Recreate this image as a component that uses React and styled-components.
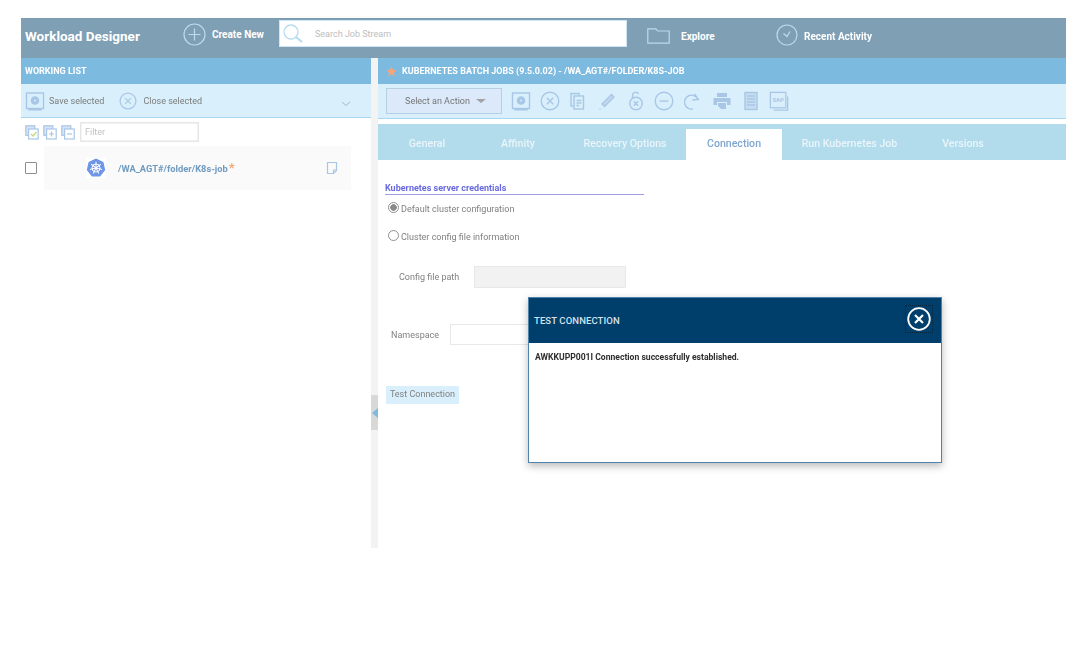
import React from 'react';
import styled, { createGlobalStyle } from 'styled-components';

const GlobalStyle = createGlobalStyle`
  html, body {
    margin: 0;
    padding: 0;
    background: #fff;
    font-family: Roboto, "Liberation Sans", sans-serif;
  }
`;

const Page = styled.div`
  position: relative;
  width: 1092px;
  height: 654px;
  padding: 18px 26px 0 21px;
  box-sizing: border-box;
  overflow: hidden;
  filter: blur(0.4px);
`;

const TopBar = styled.header`
  display: flex;
  align-items: flex-start;
  height: 40px;
  background: #7f9fb5;
  border-top: 1px solid #7b9bb2;
  box-sizing: border-box;
`;

const AppTitle = styled.div`
  width: 162px;
  padding: 10px 0 0 4px;
  box-sizing: border-box;
  color: #fff;
  font-size: 13.5px;
  line-height: 15px;
  font-weight: 700;
`;

const TopItem = styled.div`
  display: flex;
  align-items: center;
  gap: ${p => p.$gap}px;
  width: ${p => p.$width}px;
  height: 30px;
  margin-top: ${p => p.$top || 0}px;
  color: #fff;
  font-size: 10px;
  font-weight: 700;
`;

const TopLabel = styled.span`
  margin-top: ${p => p.$drop || 0}px;
`;

const SearchBox = styled.div`
  display: flex;
  align-items: center;
  gap: 11px;
  width: 348px;
  height: 27px;
  margin: 1px 20px 0 0;
  padding-left: 2px;
  box-sizing: border-box;
  background: #fff;
  border: 1px solid #cfe6f4;
  color: #bdbdbd;
  font-size: 9px;
`;

const Columns = styled.div`
  display: grid;
  grid-template-columns: 350px 7px 688px;
  height: 490px;
`;

const Pane = styled.section`
  display: flex;
  flex-direction: column;
  min-width: 0;
`;

const PaneTitle = styled.div`
  display: flex;
  align-items: center;
  gap: 5px;
  height: 26px;
  padding-left: ${p => p.$pad}px;
  background: #7dbae0;
  color: #fff;
  font-size: 9px;
  font-weight: 700;
  text-transform: uppercase;
`;

const ListTools = styled.div`
  display: flex;
  align-items: center;
  height: 34px;
  padding-left: 4px;
  box-sizing: border-box;
  background: #d9f0fc;
  border-bottom: 1px solid #a9d5ee;
  color: #7b7b7b;
  font-size: 9px;
`;

const ToolLabel = styled.span`
  margin: 0 ${p => p.$after}px 0 ${p => p.$before}px;
`;

const Chevron = styled.svg`
  margin: 7px 0 0 139px;
`;

const FilterRow = styled.div`
  display: flex;
  align-items: center;
  gap: 4px;
  height: 28px;
  padding: 0 0 0 4px;
`;

const FilterInput = styled.div`
  width: 119px;
  height: 20px;
  margin-left: 1px;
  padding-left: 4px;
  box-sizing: border-box;
  border: 1px solid #e6e6e6;
  box-shadow: inset 0 0 0 1px #f2f2f2;
  color: #c2c2c2;
  font-size: 9px;
  line-height: 18px;
`;

const JobRow = styled.div`
  display: flex;
  align-items: center;
  height: 44px;
  padding-left: 4px;
`;

const CheckBox = styled.span`
  width: 10px;
  height: 10px;
  border: 1px solid #8d8d8d;
  border-radius: 1px;
  background: #fff;
  flex: none;
`;

const JobCard = styled.div`
  display: flex;
  align-items: center;
  width: 307px;
  height: 44px;
  margin-left: 7px;
  padding: 0 13px 0 42px;
  box-sizing: border-box;
  background: #fafafa;
`;

const JobName = styled.span`
  flex: 1;
  margin-left: 12px;
  color: #6f9bc0;
  font-size: 9.3px;
  font-weight: 700;
`;

const Star = styled.span`
  color: #f4a67a;
  font-size: 13px;
  line-height: 9px;
  margin-left: 1px;
`;

const Divider = styled.div`
  position: relative;
  background: #f3f3f3;
`;

const Collapse = styled.div`
  position: absolute;
  top: 337px;
  left: 0;
  width: 7px;
  height: 35px;
  display: flex;
  align-items: center;
  background: #d8d8d8;

  &::after {
    content: '';
    border: 5px solid transparent;
    border-left: 0;
    border-right: 6px solid #7dbae0;
    margin-left: 1px;
  }
`;

const ActionBar = styled.div`
  display: flex;
  align-items: center;
  height: 35px;
  padding-left: 8px;
  box-sizing: border-box;
  background: #d9f0fc;
  border-bottom: 1px solid #a9d5ee;
`;

const ActionSelect = styled.div`
  display: flex;
  align-items: center;
  justify-content: center;
  gap: 6px;
  width: 116px;
  height: 26px;
  margin-right: 9px;
  padding-left: 3px;
  box-sizing: border-box;
  background: #dbe9fa;
  border: 1px solid #b6cfe2;
  color: #767676;
  font-size: 9px;

  &::after {
    content: '';
    border: 5px solid transparent;
    border-top: 4px solid #a3a3a3;
    border-bottom: 0;
  }
`;

const IconRow = styled.div`
  display: flex;
  align-items: center;
  gap: 8.7px;
`;

const Tabs = styled.nav`
  display: flex;
  align-items: flex-end;
  height: 36px;
  margin-top: 5px;
  background: #b2dbec;
`;

const Tab = styled.div`
  width: ${p => p.$width}px;
  height: 31px;
  text-align: center;
  text-indent: ${p => p.$indent || 0}px;
  line-height: 29px;
  font-size: 10.6px;
  font-weight: 500;
  color: ${p => (p.$active ? '#7ea6cf' : '#e9f5fa')};
  background: ${p => (p.$active ? '#fff' : 'transparent')};
`;

const Form = styled.div`
  padding: 23px 0 0 7px;
  color: #808080;
  font-size: 9px;
`;

const SectionTitle = styled.div`
  width: 259px;
  height: 11px;
  line-height: 11px;
  border-bottom: 1px solid #9c9ce6;
  color: #6a6adf;
  font-weight: 700;
  white-space: nowrap;
`;

const RadioRow = styled.div`
  display: flex;
  align-items: center;
  gap: 2px;
  height: 14px;
  margin: ${p => p.$top}px 0 0 3px;
`;

const Radio = styled.span`
  width: 9px;
  height: 9px;
  margin-top: -3px;
  border-radius: 50%;
  border: 1px solid #8f8f8f;
  background: ${p => (p.$on ? 'radial-gradient(circle, #8a8a8a 0 3px, #fff 3.5px)' : '#fff')};
  flex: none;
`;

const FieldRow = styled.div`
  display: flex;
  align-items: center;
  height: ${p => p.$h}px;
  margin-top: ${p => p.$top}px;
  padding-left: ${p => p.$pad}px;
`;

const FieldLabel = styled.span`
  width: ${p => p.$width}px;
  flex: none;
`;

const FieldInput = styled.div`
  width: ${p => p.$width}px;
  height: 100%;
  box-sizing: border-box;
  border: 1px solid #e8e8e8;
  background: ${p => (p.$off ? '#f2f2f2' : '#fff')};
`;

const TestButton = styled.div`
  width: 73px;
  height: 18px;
  margin: 41px 0 0 1px;
  background: #d9f0fc;
  color: #808080;
  text-align: center;
  line-height: 17px;
  white-space: nowrap;
`;

const Dialog = styled.div`
  position: absolute;
  left: 528px;
  top: 297px;
  width: 414px;
  height: 166px;
  box-sizing: border-box;
  background: #fff;
  border: 1px solid #4f83ab;
  box-shadow: 0 3px 8px rgba(0, 0, 0, 0.28);
`;

const DialogHead = styled.div`
  display: flex;
  align-items: center;
  justify-content: space-between;
  height: 45px;
  padding: 0 8px 0 5px;
  background: #003f6b;
  color: #d5e2ec;
  font-size: 9.5px;
  font-weight: 500;
  letter-spacing: 0.1px;
`;

const CloseButton = styled.div`
  display: flex;
  width: 28px;
  height: 28px;
  margin-top: -3px;
  align-items: center;
  justify-content: center;
  box-sizing: border-box;
  border: 1px dotted #0a2438;
`;

const DialogBody = styled.div`
  padding: 9px 6px;
  color: #2f2f2f;
  font-size: 8.6px;
  font-weight: 700;
`;

const Svg = ({ w = 20, h = 20, vb = '0 0 20 20', stroke = '#a9c6e6', sw = 1.4, children }) => (
  <svg width={w} height={h} viewBox={vb} fill="none" stroke={stroke} strokeWidth={sw} style={{ flex: 'none' }}>
    {children}
  </svg>
);

const DiskIcon = () => (
  <Svg>
    <rect x="1.5" y="2" width="17" height="15.5" />
    <circle cx="10" cy="9.5" r="3.6" fill="#a9c6e6" />
    <circle cx="10" cy="9.5" r="1" fill="#d9f0fc" stroke="none" />
    <path d="M4 17.5v1.2h12v-1.2" />
  </Svg>
);

const XCircleIcon = ({ size = 20, color }) => (
  <Svg w={size} h={size} stroke={color}>
    <circle cx="10" cy="10" r="8.8" />
    <path d="M6.8 6.8l6.4 6.4M13.2 6.8l-6.4 6.4" />
  </Svg>
);

const CopyIcon = () => (
  <Svg>
    <path d="M5 15H3V2.5h8v2" />
    <rect x="6" y="5" width="9.5" height="13" />
    <path d="M8.5 9.5h5M8.5 12h5M8.5 14.5h2.5" />
  </Svg>
);

const PencilIcon = () => (
  <Svg>
    <path d="M5 13l9.5-9.5 2.5 2.5L7.5 15.5z" fill="#c3d8ec" />
    <path d="M2.5 18h1" />
  </Svg>
);

const UnlockIcon = () => (
  <Svg>
    <path d="M6.5 7V4.5a3.2 3.2 0 0 1 6-1.5" />
    <circle cx="10" cy="12.5" r="6.2" />
    <path d="M7.8 10.3l4.4 4.4M12.2 10.3l-4.4 4.4" />
  </Svg>
);

const MinusCircleIcon = () => (
  <Svg>
    <circle cx="10" cy="10" r="8.8" />
    <path d="M5.5 10h9" />
  </Svg>
);

const RedoIcon = () => (
  <Svg>
    <path d="M15 8.5A7 7 0 1 0 10 18" />
    <path d="M11.5 2.8l3.8 5.6-6 .6" />
  </Svg>
);

const PrinterIcon = () => (
  <Svg stroke="none">
    <path d="M5 2h10v4H5z" fill="#a9c6e6" />
    <path d="M1.5 7h17v7H15v-3H5v3H1.5z" fill="#a9c6e6" />
    <path d="M6 12h8v6H9l-3-3z" fill="#a9c6e6" />
  </Svg>
);

const DocIcon = () => (
  <Svg>
    <rect x="4" y="1.5" width="12" height="17" fill="#c6dcef" />
    <path d="M6 5h8M6 8h8M6 11h8M6 14h8" />
  </Svg>
);

const SapIcon = () => (
  <Svg vb="0 0 22 22">
    <path d="M20.5 6v15H5" />
    <rect x="1.5" y="1.5" width="17" height="17" fill="#d9f0fc" />
    <text x="10" y="12.5" textAnchor="middle" fontSize="6.5" fontWeight="700" fill="#a9c6e6" stroke="none" fontFamily="Roboto">SAP</text>
  </Svg>
);

const StackIcon = ({ mark }) => (
  <Svg w={14} h={15} vb="0 0 14 15" sw={1.2}>
    <rect x="0.8" y="0.8" width="9" height="9.5" fill="#d5e5f4" />
    <rect x="3.6" y="4" width="9.6" height="10" fill="#fff" />
    {mark === 'check' && <path d="M6 9l2 2 3.5-4" stroke="#c3d97c" />}
    {mark === 'plus' && <path d="M6 9h5M8.5 6.5v5" />}
    {mark === 'minus' && <path d="M6 9h5" />}
  </Svg>
);

const KubeIcon = () => {
  const spokes = [0, 51, 103, 154, 206, 257, 309];
  return (
    <svg width="20" height="20" viewBox="0 0 20 20" style={{ flex: 'none', background: '#fff' }}>
      <path d="M10 .6l7.4 3.5 1.8 8-5.1 6.4H5.9L.8 12.1l1.8-8z" fill="#6f95e6" />
      <circle cx="10" cy="10" r="4" fill="none" stroke="#fff" strokeWidth="1" />
      {spokes.map(a => (
        <path key={a} d="M10 10V3.8" stroke="#fff" strokeWidth="1" transform={`rotate(${a} 10 10)`} />
      ))}
    </svg>
  );
};

const NoteIcon = () => (
  <Svg w={12} h={14} vb="0 0 12 14" sw={1.2}>
    <path d="M1.5 1.5h9v8L7.5 12.5h-6z" />
    <path d="M10.5 9h-3v3.5" />
  </Svg>
);

const App = () => (
  <>
    <GlobalStyle />
    <Page>
      <TopBar>
        <AppTitle>Workload Designer</AppTitle>
        <TopItem $gap={6} $width={96}>
          <Svg w={23} h={23} vb="0 0 23 23" stroke="#b9dcee" sw={1.2}>
            <circle cx="11.5" cy="11.5" r="10.5" />
            <path d="M11.5 5.5v12M5.5 11.5h12" />
          </Svg>
          Create New
        </TopItem>
        <SearchBox>
          <Svg w={22} h={22} vb="0 0 22 22" stroke="#b5dcf0" sw={1.3}>
            <circle cx="9" cy="9" r="7" />
            <path d="M14 14l6 5" strokeWidth="2" />
          </Svg>
          Search Job Stream
        </SearchBox>
        <TopItem $gap={11} $width={129} $top={2}>
          <Svg w={23} h={16} vb="0 0 23 16" stroke="#b9dcee" sw={1.2}>
            <path d="M.8 15.2V.8h8l2 2.2h11.400v12.200z" />
          </Svg>
          Explore
        </TopItem>
        <TopItem $gap={6} $width={120} $top={1}>
          <Svg w={22} h={22} vb="0 0 22 22" stroke="#b9dcee" sw={1.2}>
            <circle cx="11" cy="11" r="10" />
            <path d="M7.5 9.5L11 12.5l3-5" />
          </Svg>
          <TopLabel $drop={2}>Recent Activity</TopLabel>
        </TopItem>
      </TopBar>
      <Columns>
        <Pane>
          <PaneTitle $pad={4}>Working List</PaneTitle>
          <ListTools>
            <DiskIcon />
            <ToolLabel $before={4} $after={15}>Save selected</ToolLabel>
            <XCircleIcon size={18} />
            <ToolLabel $before={6} $after={0}>Close selected</ToolLabel>
            <Chevron width="10" height="6" viewBox="0 0 10 6" fill="none" stroke="#a8b8c4">
              <path d="M1 1l4 3.5L9 1" />
            </Chevron>
          </ListTools>
          <FilterRow>
            <StackIcon mark="check" />
            <StackIcon mark="plus" />
            <StackIcon mark="minus" />
            <FilterInput>Filter</FilterInput>
          </FilterRow>
          <JobRow>
            <CheckBox />
            <JobCard>
              <KubeIcon />
              <JobName>/WA_AGT#/folder/K8s-job<Star>*</Star></JobName>
              <NoteIcon />
            </JobCard>
          </JobRow>
        </Pane>
        <Divider><Collapse /></Divider>
        <Pane>
          <PaneTitle $pad={8}>
            <svg width="11" height="11" viewBox="0 0 20 20"><path d="M10 1l2.8 6 6.5.7-4.9 4.4 1.4 6.4L10 15.2l-5.800 3.300 1.400-6.400L.7 7.700l6.500-.7z" fill="#f4a67a" /></svg>
            Kubernetes Batch Jobs (9.5.0.02) - /WA_AGT#/folder/K8s-job
          </PaneTitle>
          <ActionBar>
            <ActionSelect>Select an Action</ActionSelect>
            <IconRow>
              <DiskIcon />
              <XCircleIcon />
              <CopyIcon />
              <PencilIcon />
              <UnlockIcon />
              <MinusCircleIcon />
              <RedoIcon />
              <PrinterIcon />
              <DocIcon />
              <SapIcon />
            </IconRow>
          </ActionBar>
          <Tabs>
            <Tab $width={98}>General</Tab>
            <Tab $width={84}>Affinity</Tab>
            <Tab $width={126} $indent={4}>Recovery Options</Tab>
            <Tab $width={96} $active>Connection</Tab>
            <Tab $width={135}>Run Kubernetes Job</Tab>
            <Tab $width={92}>Versions</Tab>
          </Tabs>
          <Form>
            <SectionTitle>Kubernetes server credentials</SectionTitle>
            <RadioRow $top={7}><Radio $on />Default cluster configuration</RadioRow>
            <RadioRow $top={14}><Radio />Cluster config file information</RadioRow>
            <FieldRow $h={22} $top={22} $pad={14}>
              <FieldLabel $width={75}>Config file path</FieldLabel>
              <FieldInput $off $width={152} />
            </FieldRow>
            <FieldRow $h={21} $top={36} $pad={6}>
              <FieldLabel $width={59}>Namespace</FieldLabel>
              <FieldInput $width={152} />
            </FieldRow>
            <TestButton>Test Connection</TestButton>
          </Form>
        </Pane>
      </Columns>
      <Dialog>
        <DialogHead>
          TEST CONNECTION
          <CloseButton>
            <Svg w={24} h={24} vb="0 0 24 24" stroke="#fff" sw={1.8}>
              <circle cx="12" cy="12" r="10.8" />
              <path d="M8 8l8 8M16 8l-8 8" strokeWidth="2.2" />
            </Svg>
          </CloseButton>
        </DialogHead>
        <DialogBody>AWKKUPP001I Connection successfully established.</DialogBody>
      </Dialog>
    </Page>
  </>
);

export default App;
